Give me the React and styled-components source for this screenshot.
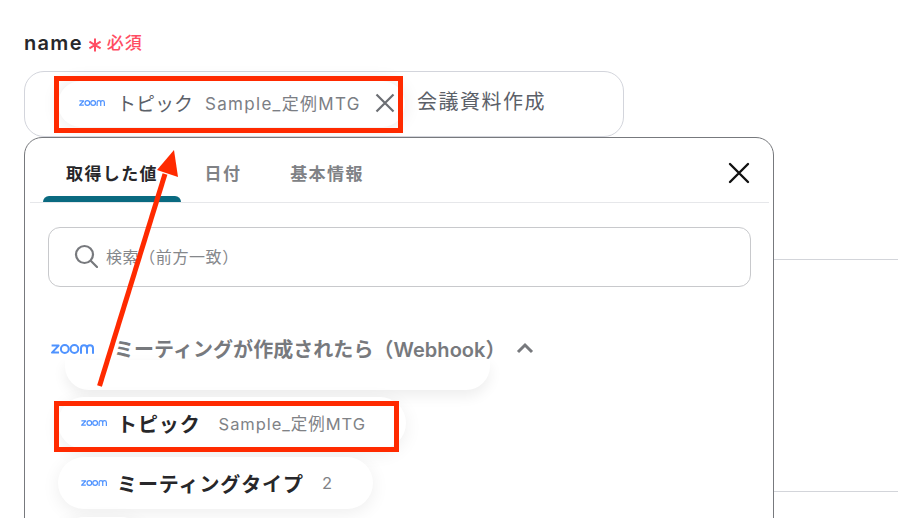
import React from "react";
import styled, { createGlobalStyle } from "styled-components";

const Global = createGlobalStyle`
  html, body { margin: 0; padding: 0; background: #fff; }
  body { font-family: Inter, "Noto Sans CJK JP", sans-serif; overflow: hidden; }
  * { box-sizing: border-box; }
`;

const Page = styled.div`
  position: relative;
  width: 898px;
  height: 518px;
  overflow: hidden;
  padding: 31px 0 0 24px;
`;

const Label = styled.div`
  display: flex;
  align-items: center;
  height: 24px;
  margin-bottom: 16px;
  font-size: 20px;
  font-weight: 600;
  letter-spacing: 1.3px;
  color: #27272a;
`;

const Star = styled.svg`
  margin: 4px 0 0 5px;
  flex: none;
`;

const Required = styled.span`
  margin: -3px 0 0 5px;
  color: #ff4d63;
  font-size: 17px;
  font-weight: 500;
  letter-spacing: 1px;
`;

const Field = styled.div`
  display: flex;
  align-items: center;
  width: 600px;
  height: 66px;
  padding: 0 0 0 33px;
  border: 1px solid #d3d5dc;
  border-radius: 20px;
`;

const FieldChip = styled.div`
  display: flex;
  align-items: center;
  width: 347px;
  height: 46px;
  padding: 0 0 3px 21px;
  border-radius: 23px;
  background: #fff;
  box-shadow: 0 0 18px rgba(0, 0, 0, 0.09);
`;

const FieldChipName = styled.span`
  margin-left: 12px;
  font-size: 19px;
  color: #5b6068;
`;

const FieldChipValue = styled.span`
  margin-left: 12px;
  font-size: 17px;
  letter-spacing: 1.3px;
  color: #7b7e84;
  white-space: nowrap;
`;

const ClearIcon = styled.svg`
  margin-left: 14px;
  flex: none;
`;

const FieldText = styled.span`
  margin: 0 0 8px 12px;
  font-size: 20px;
  letter-spacing: 1.5px;
  color: #5b6068;
`;

const Lower = styled.div`
  display: flex;
  align-items: flex-start;
`;

const Popover = styled.div`
  flex: none;
  width: 750px;
  height: 420px;
  padding: 0 4px 0 5px;
  background: #fff;
  border: 1px solid #77797d;
  border-radius: 18px;
`;

const Side = styled.div`
  flex: 1;
  display: flex;
  flex-direction: column;
  gap: 231px;
  padding-top: 122px;
`;

const SideRule = styled.div`
  height: 1px;
  background: #d3d5da;
`;

const TabBar = styled.div`
  display: flex;
  height: 65px;
  padding-left: 13px;
  border-bottom: 1px solid #e6e7ea;
  position: relative;
`;

const Tab = styled.div`
  position: relative;
  display: flex;
  align-items: flex-start;
  justify-content: center;
  height: 100%;
  width: ${(p) => p.$w}px;
  padding-top: 22px;
  font-size: 17px;
  font-weight: 600;
  letter-spacing: 1.4px;
  color: ${(p) => (p.$active ? "#27272a" : "#808286")};
  &::after {
    content: "";
    display: ${(p) => (p.$active ? "block" : "none")};
    position: absolute;
    left: 0;
    right: 0;
    bottom: 0;
    height: 6px;
    background: #0a6a80;
    border-radius: 6px 6px 0 0;
  }
`;

const CloseIcon = styled.svg`
  position: absolute;
  right: 18px;
  top: 23px;
`;

const Body = styled.div`
  padding: 24px 18px 0 18px;
`;

const Search = styled.div`
  display: flex;
  align-items: center;
  height: 60px;
  padding: 0 0 2px 25px;
  border: 1px solid #c8c9cc;
  border-radius: 12px;
`;

const Placeholder = styled.span`
  margin-left: 8px;
  font-size: 16px;
  letter-spacing: 0.6px;
  color: #85878b;
`;

const SectionHeader = styled.div`
  display: flex;
  align-items: center;
  height: 60px;
  margin: 31px 0 0 3px;
  position: relative;
  z-index: 1;
`;

const SectionTitle = styled.span`
  margin-left: 20px;
  font-size: 20px;
  font-weight: 600;
  letter-spacing: 0.05px;
  color: #77797d;
  white-space: nowrap;
`;

const Chevron = styled.svg`
  margin-left: 10px;
  flex: none;
`;

const HeaderShadow = styled.div`
  width: 425px;
  height: 30px;
  margin: -18px 0 0 17px;
  border-radius: 0 0 24px 24px;
  box-shadow: 0 6px 14px rgba(0, 0, 0, 0.07);
`;

const List = styled.div`
  display: flex;
  flex-direction: column;
  gap: 8px;
  margin: 7px 0 0 10px;
`;

const Chip = styled.div`
  display: flex;
  align-items: center;
  width: fit-content;
  height: 52px;
  padding: 0 40px 0 23px;
  background: #fff;
  border-radius: 26px;
  box-shadow: 0 4px 18px rgba(0, 0, 0, 0.07);
`;

const ChipName = styled.span`
  margin-left: 10px;
  font-size: 20px;
  font-weight: 600;
  letter-spacing: 0.9px;
  color: #27272a;
  white-space: nowrap;
`;

const ChipValue = styled.span`
  margin-left: 18px;
  font-size: 16.5px;
  letter-spacing: 0.95px;
  color: #808286;
  white-space: nowrap;
`;

const Highlight = styled.div`
  position: absolute;
  left: ${(p) => p.$x}px;
  top: ${(p) => p.$y}px;
  width: ${(p) => p.$w}px;
  height: ${(p) => p.$h}px;
  border: 5px solid #ff2a00;
`;

const ArrowLayer = styled.svg`
  position: absolute;
  left: 0;
  top: 0;
  pointer-events: none;
`;

function ZoomLogo({ width = 26, color = "#4f93ff" }) {
  return (
    <svg width={width} height={(width * 10) / 43} viewBox="0 0 43 10" fill="none" style={{ flex: "none", marginTop: 1 }} aria-label="zoom">
      <g stroke={color} strokeWidth="2">
        <path d="M0.6 1.6H7.6L1 8.6H8" strokeLinejoin="round" />
        <circle cx="13.8" cy="5" r="3.9" />
        <circle cx="23.4" cy="5" r="3.9" />
        <path d="M30 9.8V4.2a3 3 0 0 1 6 0V9.8M36 4.2a3 3 0 0 1 6 0V9.8" />
      </g>
    </svg>
  );
}

export default function App() {
  return (
    <Page>
      <Global />
      <Label>
        name
        <Star width="14" height="14" viewBox="0 0 14 14">
          <path d="M7 0.5V13.5M1.4 3.7L12.6 10.3M12.6 3.7L1.4 10.3" stroke="#ff4d63" strokeWidth="2" />
        </Star>
        <Required>必須</Required>
      </Label>
      <Field>
        <FieldChip>
          <ZoomLogo />
          <FieldChipName>トピック</FieldChipName>
          <FieldChipValue>Sample_定例MTG</FieldChipValue>
          <ClearIcon width="20" height="20" viewBox="0 0 20 20">
            <path d="M1.5 1.5L18.5 18.5M18.5 1.5L1.5 18.5" stroke="#6b6e73" strokeWidth="2.2" />
          </ClearIcon>
        </FieldChip>
        <FieldText>会議資料作成</FieldText>
      </Field>
      <Lower>
        <Popover>
          <TabBar>
            <Tab $active $w={138}>取得した値</Tab>
            <Tab $w={84}>日付</Tab>
            <Tab $w={124}>基本情報</Tab>
            <CloseIcon width="24" height="24" viewBox="0 0 24 24">
              <path d="M3 3L21 21M21 3L3 21" stroke="#111" strokeWidth="2.4" strokeLinecap="round" />
            </CloseIcon>
          </TabBar>
          <Body>
            <Search>
              <svg width="24" height="24" viewBox="0 0 24 24" fill="none" style={{ flex: "none" }}>
                <circle cx="10.5" cy="10.5" r="8.5" stroke="#77797d" strokeWidth="2.2" />
                <path d="M17 17L23 23" stroke="#77797d" strokeWidth="2.2" strokeLinecap="round" />
              </svg>
              <Placeholder>検索（前方一致）</Placeholder>
            </Search>
            <SectionHeader>
              <ZoomLogo width={43} />
              <SectionTitle>ミーティングが作成されたら（Webhook）</SectionTitle>
              <Chevron width="18" height="12" viewBox="0 0 18 12" fill="none">
                <path d="M2 10L9 3L16 10" stroke="#77797d" strokeWidth="3" />
              </Chevron>
            </SectionHeader>
            <HeaderShadow />
            <List>
              <Chip>
                <ZoomLogo />
                <ChipName>トピック</ChipName>
                <ChipValue>Sample_定例MTG</ChipValue>
              </Chip>
              <Chip>
                <ZoomLogo />
                <ChipName>ミーティングタイプ</ChipName>
                <ChipValue>2</ChipValue>
              </Chip>
              <Chip>
                <ZoomLogo />
              </Chip>
            </List>
          </Body>
        </Popover>
        <Side>
          <SideRule />
          <SideRule />
        </Side>
      </Lower>
      <Highlight $x={54} $y={76} $w={349} $h={57} />
      <Highlight $x={54} $y={401} $w={345} $h={51} />
      <ArrowLayer width="898" height="518" viewBox="0 0 898 518">
        <path d="M99.5 386L165 174" stroke="#ff2a00" strokeWidth="5" />
        <path d="M174 150L157 170L178 177Z" fill="#ff2a00" />
      </ArrowLayer>
    </Page>
  );
}
